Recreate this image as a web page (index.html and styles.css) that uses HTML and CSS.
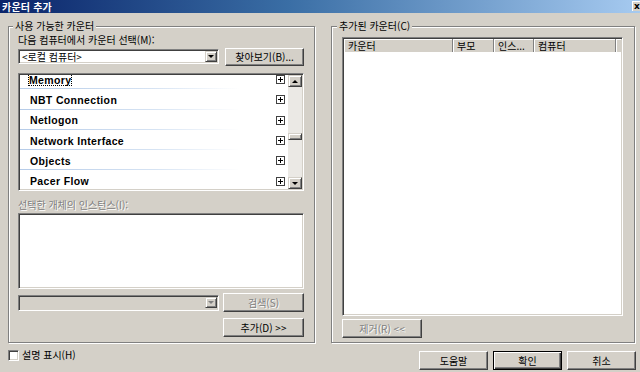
FILE: index.html
```html
<!DOCTYPE html>
<html lang="ko">
<head>
<meta charset="utf-8">
<title>카운터 추가</title>
<link rel="stylesheet" href="styles.css">
</head>
<body>
<div class="window">
  <div class="titlebar">
    <span class="title">카운터 추가</span>
    <span class="close">x</span>
  </div>
  <div class="groups">
    <section class="group group-left">
      <div class="legend">사용 가능한 카운터</div>
      <div class="label">다음 컴퓨터에서 카운터 선택(M):</div>
      <div class="row row-computer">
        <div class="combo">
          <span class="combo-text">&lt;로컬 컴퓨터&gt;</span>
          <span class="combo-btn"><span class="arrow-down"></span></span>
        </div>
        <button class="btn btn-browse">찾아보기(B)...</button>
      </div>
      <div class="listbox">
        <div class="list-rows">
          <div class="item first"><span class="item-text focus">Memory</span><span class="plus"></span></div>
          <div class="item"><span class="item-text">NBT Connection</span><span class="plus"></span></div>
          <div class="item"><span class="item-text">Netlogon</span><span class="plus"></span></div>
          <div class="item"><span class="item-text">Network Interface</span><span class="plus"></span></div>
          <div class="item"><span class="item-text">Objects</span><span class="plus"></span></div>
          <div class="item"><span class="item-text">Pacer Flow</span><span class="plus"></span></div>
        </div>
        <div class="scrollbar">
          <span class="sb-btn"><span class="arrow-up"></span></span>
          <span class="sb-track top"></span>
          <span class="sb-thumb"></span>
          <span class="sb-track bottom"></span>
          <span class="sb-btn"><span class="arrow-down"></span></span>
        </div>
      </div>
      <div class="label disabled label-inst">선택한 개체의 인스턴스(I):</div>
      <div class="instbox"></div>
      <div class="row row-search">
        <div class="combo combo-disabled">
          <span class="combo-text"></span>
          <span class="combo-btn"><span class="arrow-down dis"></span></span>
        </div>
        <button class="btn btn-wide disabled">검색(S)</button>
      </div>
      <div class="row row-add">
        <button class="btn btn-wide">추가(D) &gt;&gt;</button>
      </div>
    </section>
    <section class="group group-right">
      <div class="legend">추가된 카운터(C)</div>
      <div class="listview">
        <div class="lv-header">
          <span class="col c1">카운터</span>
          <span class="col c2">부모</span>
          <span class="col c3">인스...</span>
          <span class="col c4">컴퓨터</span>
          <span class="col c5"></span>
        </div>
      </div>
      <button class="btn btn-wide btn-remove disabled">제거(R) &lt;&lt;</button>
    </section>
  </div>
  <div class="bottom">
    <label class="check"><span class="checkbox"></span><span>설명 표시(H)</span></label>
    <div class="actions">
      <button class="btn btn-action">도움말</button>
      <button class="btn btn-action default">확인</button>
      <button class="btn btn-action">취소</button>
    </div>
  </div>
</div>
</body>
</html>
```
FILE: styles.css
```css
* { box-sizing: border-box; }
html, body { margin: 0; padding: 0; }
body {
  background: #d4d0c8;
  font-family: "Noto Sans CJK KR", "Noto Sans", sans-serif;
  font-size: 10px;
  color: #000;
}
.window {
  width: 640px;
  height: 372px;
  display: flex;
  flex-direction: column;
  overflow: hidden;
}
.titlebar {
  height: 13px;
  display: flex;
  justify-content: space-between;
  align-items: flex-start;
  background: linear-gradient(to right, #0a246a 0%, #3a6ea5 45%, #a6caf0 100%);
}
.title {
  color: #fff;
  font-weight: bold;
  font-size: 10px;
  line-height: 13px;
  padding-left: 2px;
  letter-spacing: 0.2px;
}
.close {
  width: 8px;
  height: 10px;
  margin-top: 1px;
  background: #d4d0c8;
  border-top: 1px solid #fff;
  border-left: 1px solid #fff;
  font-family: "DejaVu Sans", sans-serif;
  font-weight: bold;
  font-size: 9px;
  line-height: 8px;
  padding-left: 1px;
  overflow: hidden;
}
.groups {
  display: flex;
  gap: 16px;
  padding-left: 8px;
  margin-top: 13px;
}
.group {
  border: 1px solid #808080;
  box-shadow: inset 1px 1px #fff, 1px 1px #fff;
  height: 317px;
  display: flex;
  flex-direction: column;
}
.group-left {
  width: 307px;
  padding: 0 10px 0 9px;
}
.group-right {
  width: 304px;
  padding: 0 11px 0 10px;
}
.legend {
  margin-top: -7px;
  margin-left: -5px;
  height: 12px;
  line-height: 12px;
  padding: 0 2px;
  background: #d4d0c8;
  align-self: flex-start;
}
.label {
  height: 12px;
  line-height: 12px;
  margin-top: 2px;
}
.label.disabled, .btn.disabled {
  color: #808080;
  text-shadow: 1px 1px #fff;
}
.row {
  display: flex;
  align-items: flex-start;
  justify-content: space-between;
}
.row-computer { margin-top: 2px; height: 18px; }
.combo {
  width: 201px;
  height: 15px;
  margin-top: 1px;
  background: #fff;
  border: 1px solid;
  border-color: #808080 #fff #fff #808080;
  box-shadow: inset 1px 1px #404040, inset -1px -1px #d4d0c8;
  display: flex;
  justify-content: space-between;
  padding: 1px;
}
.combo-text {
  line-height: 11px;
  height: 11px;
  padding-left: 2px;
  white-space: nowrap;
}
.combo-btn {
  width: 12px;
  height: 11px;
  background: #d4d0c8;
  border: 1px solid;
  border-color: #d4d0c8 #404040 #404040 #d4d0c8;
  box-shadow: inset 1px 1px #fff, inset -1px -1px #808080;
  display: flex;
  align-items: center;
  justify-content: center;
}
.arrow-down {
  width: 0; height: 0;
  border-left: 3px solid transparent;
  border-right: 3px solid transparent;
  border-top: 3px solid #000;
}
.arrow-down.dis { border-top-color: #808080; }
.arrow-up {
  width: 0; height: 0;
  border-left: 3px solid transparent;
  border-right: 3px solid transparent;
  border-bottom: 3px solid #000;
}
.btn {
  font-family: "Noto Sans CJK KR", "Noto Sans", sans-serif;
  font-size: 10px;
  line-height: 12px;
  color: #000;
  background: #d4d0c8;
  border: 1px solid;
  border-color: #fff #404040 #404040 #fff;
  box-shadow: inset -1px -1px #808080, inset 1px 1px #d4d0c8;
  padding: 0;
  margin: 0;
  text-align: center;
}
.btn-browse { width: 79px; height: 18px; }
.btn-wide { width: 81px; height: 19px; }
.listbox {
  margin-top: 7px;
  height: 118px;
  background: #fff;
  border: 1px solid;
  border-color: #808080 #fff #fff #808080;
  box-shadow: inset 1px 1px #404040, inset -1px -1px #d4d0c8;
  padding: 1px;
  display: flex;
}
.list-rows {
  flex: 1;
  overflow: hidden;
  display: flex;
  flex-direction: column;
}
.item {
  flex: none;
  height: 20.3px;
  display: flex;
  align-items: center;
  justify-content: space-between;
  padding: 1px 3px 0 10px;
  background: linear-gradient(to right, #b5cbe8 0%, #d6e3f3 50%, #ffffff 82%) bottom / 100% 1px no-repeat;
}
.item.first {
  margin-top: -6px;
}
.item-text {
  font-family: "Liberation Sans", Arial, sans-serif;
  font-weight: bold;
  font-size: 10.5px;
  letter-spacing: 0.35px;
  line-height: 12px;
}
.focus {
  outline: 1px dotted #000;
  outline-offset: -1px;
  padding: 0 1px;
  margin-left: -2px;
}
.plus {
  width: 9px;
  height: 9px;
  border: 1px solid #404040;
  background:
    linear-gradient(#000, #000) center / 5px 1px no-repeat,
    linear-gradient(#000, #000) center / 1px 5px no-repeat,
    #fff;
}
.scrollbar {
  width: 14px;
  display: flex;
  flex-direction: column;
  background: #ebe9e5;
}
.sb-btn {
  height: 12px;
  background: #d4d0c8;
  border: 1px solid;
  border-color: #d4d0c8 #404040 #404040 #d4d0c8;
  box-shadow: inset 1px 1px #fff, inset -1px -1px #808080;
  display: flex;
  align-items: center;
  justify-content: center;
}
.sb-track.top { height: 46px; }
.sb-track.bottom { flex: 1; }
.sb-thumb {
  height: 7px;
  background: #d4d0c8;
  border: 1px solid;
  border-color: #d4d0c8 #404040 #404040 #d4d0c8;
  box-shadow: inset 1px 1px #fff, inset -1px -1px #808080;
}
.label-inst { margin-top: 8px; }
.instbox {
  margin-top: 2px;
  height: 76px;
  background: #fff;
  border: 1px solid;
  border-color: #808080 #fff #fff #808080;
  box-shadow: inset 1px 1px #404040, inset -1px -1px #d4d0c8;
}
.row-search { margin-top: 4px; height: 19px; }
.row-search .combo { margin-top: 2px; height: 16px; }
.combo-disabled { background: #d4d0c8; }
.row-add { margin-top: 6px; justify-content: flex-end; }
.listview {
  margin-top: 5px;
  height: 279px;
  background: #fff;
  border: 1px solid;
  border-color: #808080 #fff #fff #808080;
  box-shadow: inset 1px 1px #404040, inset -1px -1px #d4d0c8;
  padding: 1px;
}
.lv-header {
  display: flex;
  height: 13px;
}
.col {
  height: 13px;
  line-height: 13px;
  padding-left: 4px;
  background: #d4d0c8;
  border-right: 1px solid #808080;
  box-shadow: inset 1px 1px #fff;
  white-space: nowrap;
}
.c1 { width: 109px; }
.c2 { width: 41px; }
.c3 { width: 40px; }
.c4 { width: 82px; }
.c5 { flex: 1; border-right: none; }
.btn-remove { margin-top: 3px; width: 80px; }
.bottom {
  display: flex;
  align-items: flex-start;
  padding: 0 4px 0 8px;
  margin-top: 5px;
}
.check {
  display: flex;
  align-items: center;
  gap: 3px;
  margin-top: 1px;
  line-height: 12px;
}
.checkbox {
  width: 11px;
  height: 11px;
  background: #fff;
  border: 1px solid;
  border-color: #808080 #fff #fff #808080;
  box-shadow: inset 1px 1px #404040, inset -1px -1px #d4d0c8;
}
.actions {
  margin-left: auto;
  display: flex;
  gap: 5px;
  margin-top: 3px;
}
.btn-action { width: 69px; height: 19px; }
.btn-action.default {
  border-color: #000;
  box-shadow: inset 1px 1px #fff, inset -1px -1px #404040, inset -2px -2px #808080;
}
```
